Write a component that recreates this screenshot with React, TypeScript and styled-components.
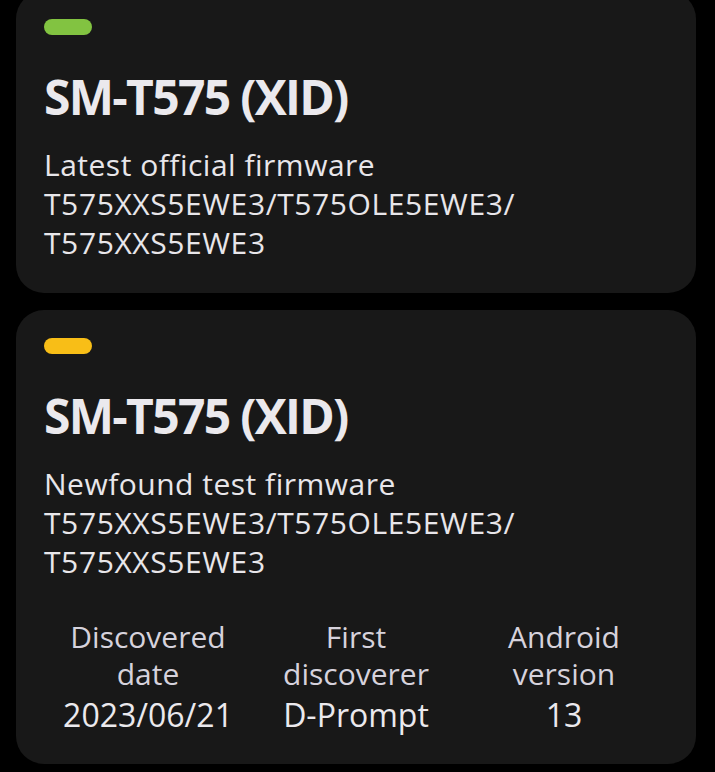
import styled, { createGlobalStyle } from 'styled-components';

const GlobalStyle = createGlobalStyle`
  body {
    margin: 0;
    background: #000;
    font-family: "Open Sans", "Noto Sans", sans-serif;
  }
`;

const Page = styled.div`
  display: flex;
  flex-direction: column;
  gap: 17px;
  margin-top: -9px;
  padding: 0 19px 9px 16px;
`;

const Card = styled.section<{ $bottom: number }>`
  background: #181818;
  border-radius: 28px;
  padding: 28px 28px ${p => p.$bottom}px;
`;

const Pill = styled.div<{ $color: string }>`
  width: 48px;
  height: 16px;
  border-radius: 8px;
  background: ${p => p.$color};
`;

const Title = styled.h1`
  margin: 32px 0 0;
  font-size: 48px;
  line-height: 60px;
  font-weight: 700;
  color: #ebe9ed;
  letter-spacing: -1.7px;
`;

const Label = styled.div`
  margin-top: 18px;
  font-size: 30px;
  line-height: 39px;
  letter-spacing: 0.5px;
  color: #e8e6ea;
`;

const Firmware = styled.div`
  font-size: 30px;
  line-height: 39px;
  letter-spacing: 0.6px;
  color: #e8e6ea;
`;

const Stats = styled.div`
  display: grid;
  grid-template-columns: repeat(3, 1fr);
  margin-top: 37px;
`;

const Stat = styled.div`
  display: flex;
  flex-direction: column;
  align-items: center;
  text-align: center;
`;

const StatName = styled.div`
  font-size: 30px;
  line-height: 37px;
  color: #d6d2dc;
`;

const StatValue = styled.div`
  margin-top: 4px;
  font-size: 32px;
  line-height: 37px;
  color: #ebe9ed;
`;

const stats = [
  { name: ['Discovered', 'date'], value: '2023/06/21' },
  { name: ['First', 'discoverer'], value: 'D-Prompt' },
  { name: ['Android', 'version'], value: '13' },
];

const App = () => {
  return (
    <>
      <GlobalStyle />
      <Page>
        <Card $bottom={31}>
          <Pill $color="#82c341" />
          <Title>SM-T575 (XID)</Title>
          <Label>Latest official firmware</Label>
          <Firmware>
            T575XXS5EWE3/T575OLE5EWE3/
            <br />
            T575XXS5EWE3
          </Firmware>
        </Card>
        <Card $bottom={31}>
          <Pill $color="#f8be17" />
          <Title>SM-T575 (XID)</Title>
          <Label>Newfound test firmware</Label>
          <Firmware>
            T575XXS5EWE3/T575OLE5EWE3/
            <br />
            T575XXS5EWE3
          </Firmware>
          <Stats>
            {stats.map(s => (
              <Stat key={s.value}>
                <StatName>
                  {s.name[0]}
                  <br />
                  {s.name[1]}
                </StatName>
                <StatValue>{s.value}</StatValue>
              </Stat>
            ))}
          </Stats>
        </Card>
      </Page>
    </>
  );
};

export default App;
